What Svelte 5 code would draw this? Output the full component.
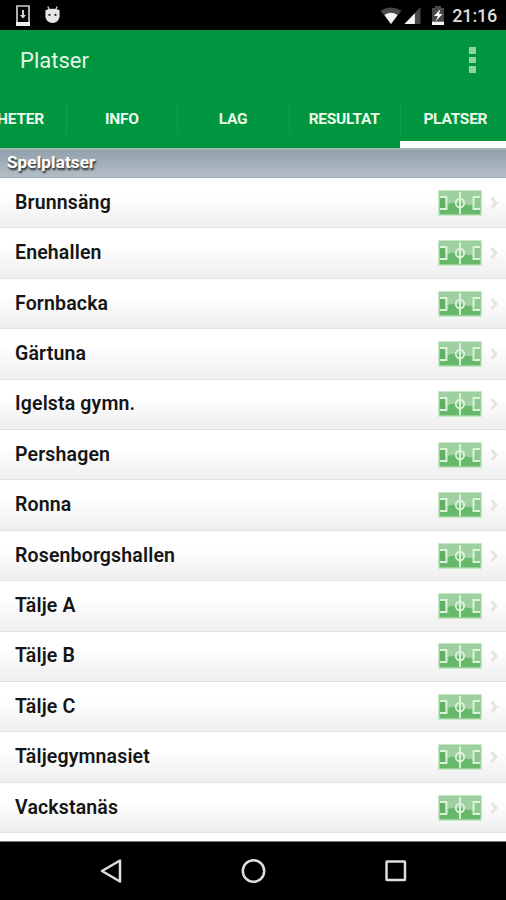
<script lang="ts">
  const tabs = ["Nyheter", "Info", "Lag", "Resultat", "Platser"];
  const venues = [
    "Brunnsäng",
    "Enehallen",
    "Fornbacka",
    "Gärtuna",
    "Igelsta gymn.",
    "Pershagen",
    "Ronna",
    "Rosenborgshallen",
    "Tälje A",
    "Tälje B",
    "Tälje C",
    "Täljegymnasiet",
    "Vackstanäs",
  ];

  let active = $state("Platser");
</script>

{#snippet pitch()}
  <svg class="pitch" viewBox="0 0 44 26" aria-hidden="true">
    <rect width="44" height="26" fill="#c9e8c8" />
    <rect x="1.5" y="1.5" width="41" height="23" fill="#66b86b" />
    <path d="M1.5 1.500h41V14q-8 2.500-16 0t-13-1-12 3z" fill="#9fd0a2" />
    <rect x="2" y="8" width="5" height="10" fill="#62b066" />
    <rect x="37" y="8" width="5" height="10" fill="#8cc890" />
    <g fill="none" stroke="#dcf3da" stroke-width="1.900">
      <path d="M22 2v22M2 7h6.500v12H2M42 7h-6.500v12H42" />
      <circle cx="22" cy="13" r="4.200" />
    </g>
  </svg>
{/snippet}

<div class="screen">
  <div class="status">
    <svg class="download" viewBox="0 0 16 21" aria-hidden="true">
      <path d="M2 1h12v19H2z" fill="none" stroke="#ccc" stroke-width="1.700" />
      <path d="M1 17h14v4H1z" fill="#eee" />
      <path d="M8 5v6" stroke="#ddd" stroke-width="1.800" />
      <path d="M5 10h6l-3 3.500z" fill="#ddd" />
    </svg>
    <svg class="robot" viewBox="0 0 18 19" aria-hidden="true">
      <path d="M4 1l2 4M14 1l-2 4" stroke="#ddd" stroke-width="1.300" />
      <path d="M1.500 5q7.500-3 15 0v7q-1 6.500-7.500 6.500T1.500 12z" fill="#e6e6e6" />
      <circle cx="5.800" cy="10" r="1.200" fill="#222" />
      <circle cx="12.200" cy="10" r="1.200" fill="#222" />
    </svg>
    <span class="spacer"></span>
    <svg class="wifi" viewBox="0 0 22 18" aria-hidden="true">
      <path d="M0 4Q11-3 22 4L11 18z" fill="#494949" />
      <path d="M4 8.500Q11 3.500 18 8.500L11 18z" fill="#f4f4f4" />
    </svg>
    <svg class="signal" viewBox="0 0 17 18" aria-hidden="true">
      <path d="M17 0v18H0z" fill="#494949" />
      <path d="M11 6.500V18H0z" fill="#f4f4f4" />
    </svg>
    <svg class="battery" viewBox="0 0 12 19" aria-hidden="true">
      <path d="M0 2h3V0h6v2h3v13H0z" fill="#494949" />
      <path d="M0 15.500h12V19H0z" fill="#f4f4f4" />
      <path d="M8.500 3 2 10h4l-2.500 5.500 7-7.500H7z" fill="#fff" />
    </svg>
    <span class="clock">21:16</span>
  </div>

  <header class="appbar">
    <h1>Platser</h1>
    <button class="menu" aria-label="Meny">
      <i></i><i></i><i></i>
    </button>
  </header>

  <nav class="tabs">
    {#each tabs as tab (tab)}
      <button class="tab" class:active={tab === active} onclick={() => (active = tab)}>
        {tab}
      </button>
    {/each}
  </nav>

  <h2 class="section">Spelplatser</h2>

  <ul class="list">
    {#each venues as venue (venue)}
      <li>
        <span class="name">{venue}</span>
        {@render pitch()}
        <svg class="chevron" viewBox="0 0 8 12" aria-hidden="true">
          <path d="M1.500 1 6 6l-4.500 5" fill="none" stroke="#e4e4e4" stroke-width="2.800" />
        </svg>
      </li>
    {/each}
  </ul>

  <footer class="navbar">
    <svg viewBox="0 0 24 26" aria-hidden="true">
      <path d="M21 2.500v21L3 13z" />
    </svg>
    <svg viewBox="0 0 24 26" aria-hidden="true">
      <circle cx="12.500" cy="13" r="10.700" />
    </svg>
    <svg viewBox="0 0 24 26" aria-hidden="true">
      <rect x="3.500" y="3.500" width="18.500" height="18.500" rx="0.500" />
    </svg>
  </footer>
</div>

<style>
  :global(body) {
    margin: 0;
    background: #000;
  }

  .screen {
    display: flex;
    flex-direction: column;
    width: 506px;
    height: 900px;
    overflow: hidden;
    background: #fff;
    font-family: Roboto, sans-serif;
  }

  svg {
    display: block;
    flex: none;
    overflow: visible;
  }

  button {
    border: 0;
    padding: 0;
    background: none;
    color: inherit;
    font: inherit;
  }

  .status {
    display: flex;
    flex: none;
    align-items: center;
    box-sizing: border-box;
    height: 30px;
    padding: 0 9px 0 15px;
    background: #000;
    color: #ddd;
  }

  .download {
    width: 16px;
    height: 21px;
  }

  .robot {
    width: 17px;
    height: 19px;
    margin: 0 0 2px 13px;
  }

  .spacer {
    flex: 1;
  }

  .wifi {
    width: 22px;
    height: 17px;
    margin-right: 2px;
  }

  .signal {
    width: 17px;
    height: 17px;
    margin-right: 11px;
  }

  .battery {
    width: 12px;
    height: 19px;
    margin-right: 8px;
  }

  .clock {
    padding-top: 2px;
    font-size: 18px;
    font-weight: 500;
    line-height: 28px;
    letter-spacing: -0.2px;
  }

  .appbar {
    display: flex;
    flex: none;
    align-items: center;
    justify-content: space-between;
    box-sizing: border-box;
    height: 60px;
    padding: 0 30px 0 20px;
    background: #009640;
    color: #e6f5e4;
  }

  h1 {
    margin: 2px 0 0;
    font-size: 22px;
    font-weight: 400;
    line-height: 58px;
  }

  .menu {
    display: flex;
    flex-direction: column;
    gap: 3px;
  }

  .menu i {
    width: 7px;
    height: 6.500px;
    background: #91d3a2;
  }

  .tabs {
    display: flex;
    flex: none;
    height: 58px;
    margin-left: -45px;
    background: #009640;
  }

  .tab {
    position: relative;
    flex: 0 0 111.200px;
    box-sizing: border-box;
    border-bottom: 7px solid transparent;
    padding-top: 7px;
    color: #ecfbe9;
    font-size: 15.500px;
    font-weight: 700;
    letter-spacing: -0.25px;
    text-transform: uppercase;
  }

  .tab.active {
    border-bottom-color: #fff;
  }

  .tab + .tab::before {
    position: absolute;
    top: 14px;
    left: 0;
    width: 1px;
    height: 30px;
    background: #149d4c;
    content: "";
  }

  .section {
    flex: none;
    box-sizing: border-box;
    height: 30px;
    margin: 0;
    border-top: 2px solid #a5b5b4;
    border-bottom: 1px solid #a4acb3;
    padding-left: 7px;
    background: linear-gradient(#93a1ae, #b3bdc6);
    color: #fff;
    font-size: 17px;
    font-weight: 700;
    letter-spacing: 0.15px;
    line-height: 25px;
    text-shadow: 1px 2px 2px #222;
  }

  .list {
    flex: 1;
    min-height: 0;
    margin: 0;
    padding: 0;
    overflow: hidden;
    list-style: none;
  }

  li {
    display: flex;
    align-items: center;
    box-sizing: border-box;
    height: 50.420px;
    border-bottom: 1px solid #e2e2e2;
    padding: 0 8px 0 15px;
    background: linear-gradient(#fff 35%, #eee);
  }

  .name {
    flex: 1;
    color: #151515;
    font-size: 19.500px;
    font-weight: 600;
    letter-spacing: 0.15px;
    line-height: 47px;
    padding-bottom: 1px;
  }

  .pitch {
    width: 44px;
    height: 26px;
  }

  .chevron {
    width: 8px;
    height: 12px;
    margin-left: 8px;
  }

  .navbar {
    display: flex;
    flex: none;
    align-items: center;
    justify-content: center;
    gap: 118px;
    box-sizing: border-box;
    height: 59px;
    border-top: 1px solid #777;
    background: #000;
  }

  .navbar svg {
    width: 24px;
    height: 26px;
    fill: none;
    stroke: #dedede;
    stroke-width: 2.500;
    stroke-linejoin: round;
  }
</style>
